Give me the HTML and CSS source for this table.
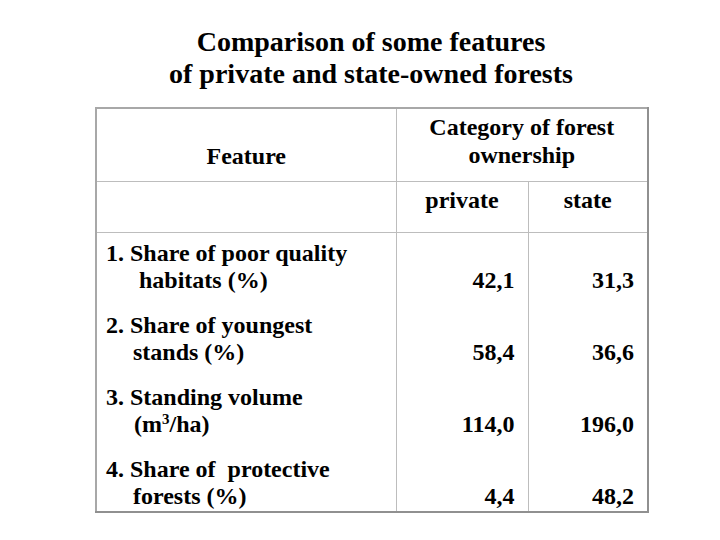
FILE: index.html
```html
<!DOCTYPE html>
<html>
<head>
<meta charset="utf-8">
<link rel="stylesheet" href="styles.css">
</head>
<body>
<div class="page">
  <h1 class="title">Comparison of some features<br>of private and state-owned forests</h1>
  <table class="grid">
    <colgroup>
      <col class="c-feat">
      <col class="c-priv">
      <col class="c-state">
    </colgroup>
    <thead>
      <tr class="h1">
        <th class="feat-head">Feature</th>
        <th class="cat-head" colspan="2">Category of forest<br>ownership</th>
      </tr>
      <tr class="h2">
        <th class="blank"></th>
        <th class="sub">private</th>
        <th class="sub">state</th>
      </tr>
    </thead>
    <tbody>
      <tr>
        <td class="label"><span class="l1">1. Share of poor quality</span><span class="l2 wide">habitats (%)</span></td>
        <td class="num">42,1</td>
        <td class="num">31,3</td>
      </tr>
      <tr>
        <td class="label"><span class="l1">2. Share of youngest</span><span class="l2">stands (%)</span></td>
        <td class="num">58,4</td>
        <td class="num">36,6</td>
      </tr>
      <tr>
        <td class="label"><span class="l1">3. Standing volume</span><span class="l2 mid">(m<sup>3</sup>/ha)</span></td>
        <td class="num">114,0</td>
        <td class="num">196,0</td>
      </tr>
      <tr class="last">
        <td class="label"><span class="l1">4. Share of&nbsp; protective</span><span class="l2">forests (%)</span></td>
        <td class="num">4,4</td>
        <td class="num">48,2</td>
      </tr>
    </tbody>
  </table>
</div>
</body>
</html>
```
FILE: styles.css
```css
html, body {
  margin: 0;
  padding: 0;
  background: #ffffff;
}
body {
  font-family: "Liberation Serif", "Times New Roman", serif;
  color: #000000;
}
.page {
  width: 552px;
  padding: 26px 0 0 95px;
}
.title {
  margin: 0 0 17px 0;
  font-size: 28px;
  line-height: 32px;
  font-weight: bold;
  text-align: center;
}
.grid {
  border-collapse: collapse;
  table-layout: fixed;
  width: 552px;
  border-top: 2px solid #a8a8a8;
  border-left: 2px solid #a8a8a8;
  border-right: 2px solid #909090;
  border-bottom: 2px solid #909090;
  font-size: 24px;
  line-height: 27px;
  font-weight: bold;
}
.c-feat { width: 300px; }
.c-priv { width: 132px; }
.c-state { width: 120px; }
.grid th,
.grid td {
  border: 1px solid #bdbdbd;
  padding: 0;
  font-weight: bold;
}
.grid .feat-head {
  height: 61px;
  vertical-align: bottom;
  padding-bottom: 11px;
  text-align: center;
  line-height: 28px;
}
.grid .cat-head {
  height: 68px;
  vertical-align: top;
  padding-top: 4px;
  text-align: center;
  line-height: 28px;
}
.grid .blank {
  height: 50px;
}
.grid .sub {
  height: 46px;
  vertical-align: top;
  padding-top: 4px;
  text-align: center;
  line-height: 28px;
}
.grid tbody td {
  border-top: none;
  border-bottom: none;
  padding: 7px 0 11px 0;
}
.grid tbody tr.last td {
  padding-bottom: 1px;
}
.grid .label {
  vertical-align: top;
  padding-left: 9px;
  text-align: left;
}
.l1, .l2 {
  display: block;
  white-space: nowrap;
}
.l2 { padding-left: 27px; }
.l2.wide { padding-left: 33px; }
.l2.mid { padding-left: 28px; }
.l2 sup {
  font-size: 15px;
  line-height: 0;
  vertical-align: 8px;
}
.grid .num {
  vertical-align: bottom;
  text-align: right;
  padding-right: 13px;
}
```
